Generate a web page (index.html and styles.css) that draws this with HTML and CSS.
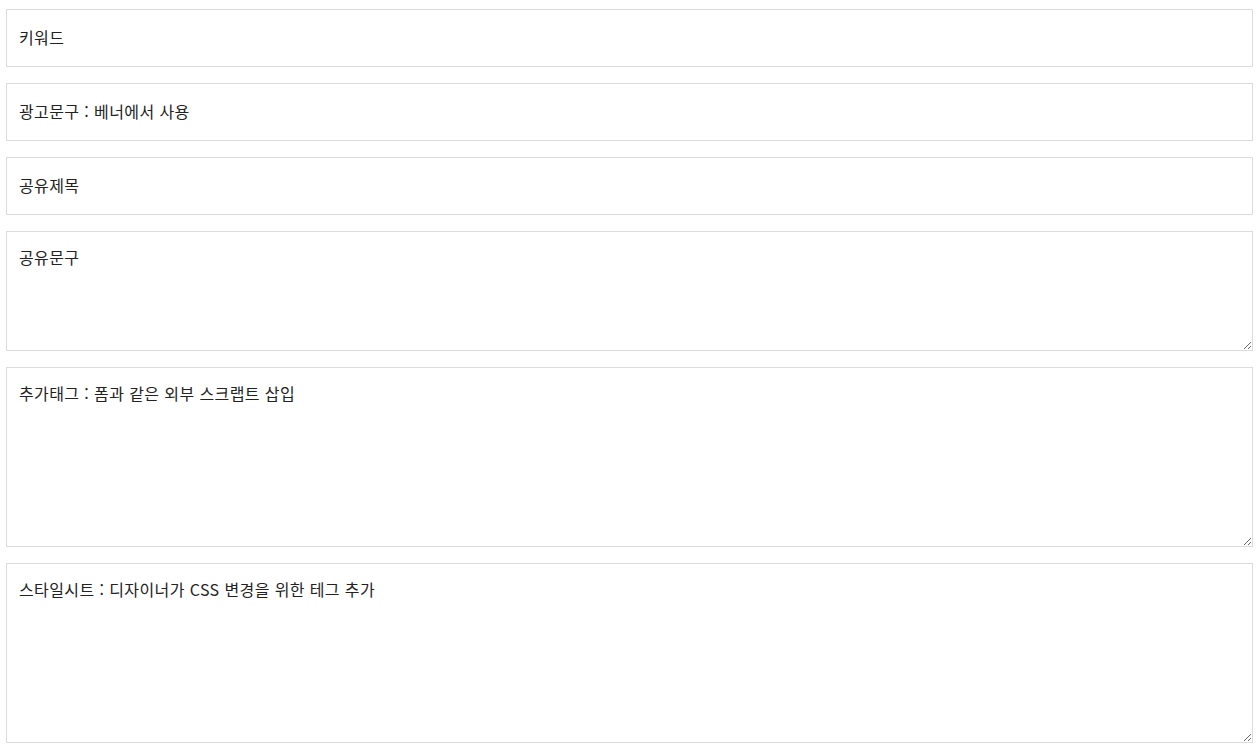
FILE: index.html
```html
<!DOCTYPE html>
<html lang="ko">
<head>
	<meta charset="UTF-8">
	<meta name="viewport" content="width=device-width, initial-scale=1.0">
	<title>광고 설정</title>
	<link rel="stylesheet" href="styles.css">
</head>
<body>
	<form class="form">
		<input type="text" class="field" placeholder="키워드">
		<input type="text" class="field" placeholder="광고문구 : 베너에서 사용">
		<input type="text" class="field" placeholder="공유제목">
		<textarea class="field area-sm" placeholder="공유문구"></textarea>
		<textarea class="field area-lg" placeholder="추가태그 : 폼과 같은 외부 스크랩트 삽입"></textarea>
		<textarea class="field area-lg" placeholder="스타일시트 : 디자이너가 CSS 변경을 위한 테그 추가"></textarea>
	</form>
</body>
</html>
```

FILE: styles.css
```css
* {
	padding: 0;
	margin: 0;
	box-sizing: border-box;
}
body {
	background: #fff;
	font-family: "Noto Sans CJK KR", "Noto Sans", sans-serif;
}
.form {
	display: flex;
	flex-direction: column;
	gap: 16px;
	padding: 9px 6px;
}
.field {
	display: block;
	width: 100%;
	height: 58px;
	padding: 0 12px 3px;
	border: 1px solid #dcdce0;
	background: #fff;
	font-family: inherit;
	font-size: 16px;
	letter-spacing: 0.4px;
	color: #222;
	outline: none;
}
.field::placeholder {
	color: #222;
	opacity: 1;
}
textarea.field {
	padding: 14px 12px;
	line-height: 1.4;
	resize: vertical;
}
.area-sm {
	height: 120px;
}
.area-lg {
	height: 180px;
}
```
